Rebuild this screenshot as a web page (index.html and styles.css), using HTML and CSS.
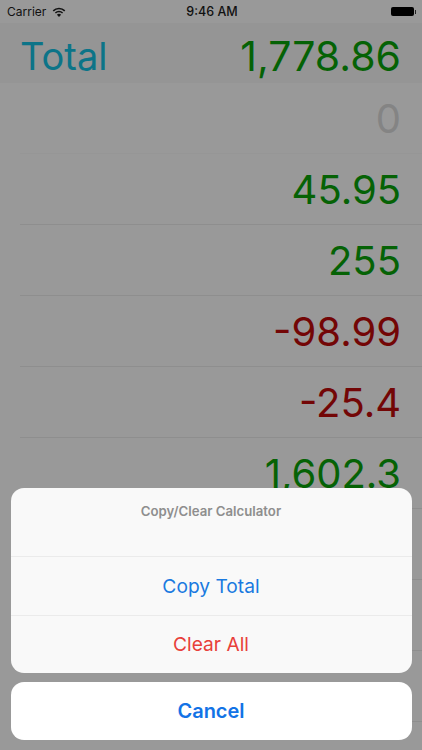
FILE: index.html
```html
<!DOCTYPE html>
<html lang="en">
<head>
<meta charset="utf-8">
<title>Calculator</title>
<link rel="stylesheet" href="styles.css">
</head>
<body>
<div class="screen">
  <div class="status">
    <div class="status-left">
      <span>Carrier</span>
      <svg class="wifi" viewBox="0 0 14 10" width="14" height="10"><path d="M7 10 4.9 7.7a3 3 0 0 1 4.2 0Z M3.9 6.6 2.9 5.5a5.9 5.9 0 0 1 8.2 0l-1 1.1a4.4 4.4 0 0 0-6.2 0Z M1.8 4.4.7 3.3a8.9 8.9 0 0 1 12.6 0l-1.1 1.1a7.4 7.4 0 0 0-10.4 0Z" fill="#111"/></svg>
    </div>
    <div class="status-time">9:46 AM</div>
    <div class="status-right">
      <span class="battery"></span><span class="battery-tip"></span>
    </div>
  </div>
  <div class="total">
    <span class="total-label">Total</span>
    <span class="total-value">1,778.86</span>
  </div>
  <div class="rows">
    <div class="row zero">0</div>
    <div class="row pos">45.95</div>
    <div class="row pos">255</div>
    <div class="row neg">-98.99</div>
    <div class="row neg">-25.4</div>
    <div class="row pos">1,602.3</div>
    <div class="row"></div>
    <div class="row"></div>
    <div class="row"></div>
  </div>
  <div class="sheet">
    <div class="group">
      <div class="sheet-title">Copy/Clear Calculator</div>
      <div class="action copy">Copy Total</div>
      <div class="action clear">Clear All</div>
    </div>
    <div class="cancel">Cancel</div>
  </div>
</div>
</body>
</html>
```
FILE: styles.css
```css
* { box-sizing: border-box; }
html, body { margin: 0; padding: 0; }
body { width: 422px; height: 750px; overflow: hidden; font-family: Inter, "Liberation Sans", sans-serif; }
.screen { position: relative; width: 422px; height: 750px; background: #999; overflow: hidden; }
.status { height: 23px; padding: 0 6px 0 7px; display: flex; align-items: center; justify-content: space-between; position: relative; font-size: 12px; color: #111; }
.status-left { display: flex; align-items: center; gap: 6px; }
.status-time { position: absolute; left: 2px; right: 0; text-align: center; font-size: 12.5px; font-weight: 500; }
.status-right { display: flex; align-items: center; }
.battery { width: 23px; height: 9px; background: #000; border-radius: 2px; }
.battery-tip { width: 1.5px; height: 4px; background: #222; margin-left: 0.5px; }
.total { height: 60px; padding: 6px 21px 0 20px; display: flex; align-items: center; justify-content: space-between; background: #959595; font-size: 41px; }
.total-label { color: #0c7488; font-size: 38px; }
.total-value { color: #056205; }
.row { height: 71px; margin-left: 20px; padding-right: 21px; display: flex; align-items: center; justify-content: flex-end; border-bottom: 1px solid #8e8e8e; font-size: 40px; }
.row.zero { color: #848484; border-bottom-color: #969696; }
.row.pos { color: #056205; }
.row.neg { color: #730606; }
.sheet { position: absolute; left: 10.5px; right: 10.5px; top: 488px; display: flex; flex-direction: column; gap: 9px; }
.group { background: #f9f9f9; border-radius: 13px; overflow: hidden; }
.sheet-title { height: 68px; padding-top: 15px; text-align: center; font-size: 13.2px; font-weight: 600; color: #8e8e8e; }
.action { height: 58.5px; display: flex; align-items: center; justify-content: center; border-top: 1px solid #ebebeb; font-size: 19.2px; }
.copy { color: #1a7ae0; }
.clear { color: #e8403a; }
.cancel { height: 58px; background: #fff; border-radius: 13px; display: flex; align-items: center; justify-content: center; font-size: 20px; font-weight: 600; color: #1273e6; }
```
